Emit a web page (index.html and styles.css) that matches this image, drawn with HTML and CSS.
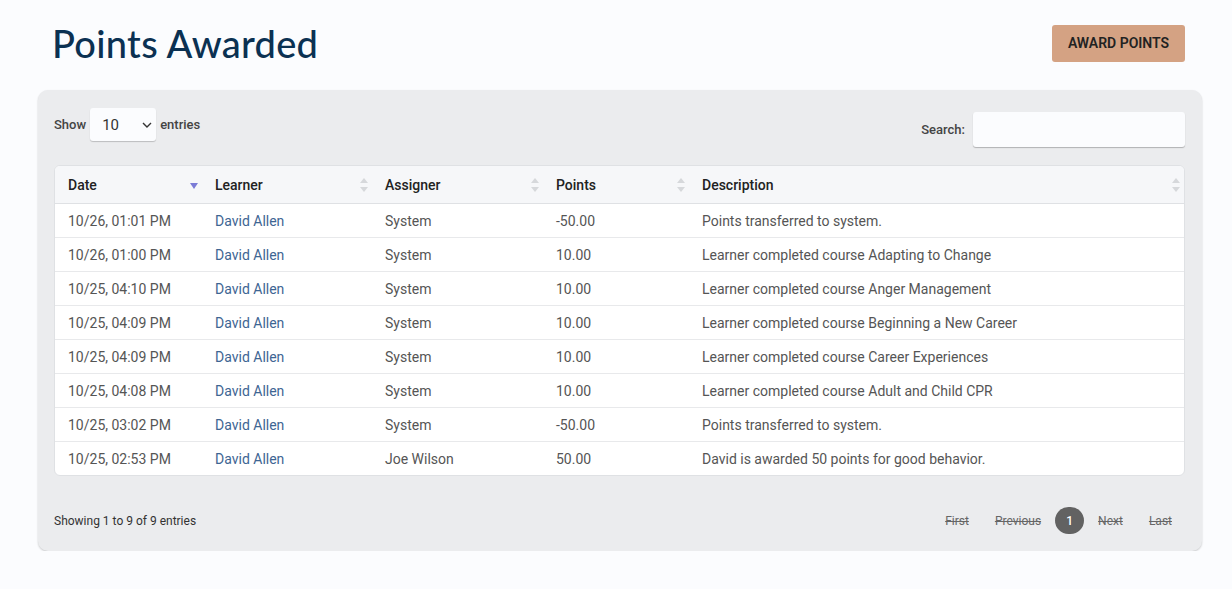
FILE: index.html
```html
<!DOCTYPE html>
<html lang="en">
<head>
    <meta charset="UTF-8">
    <title>Points Awarded</title>
    <link rel="stylesheet" href="styles.css">
</head>
<body>
    <div class="page">
        <div class="page-header">
            <h1>Points Awarded</h1>
            <button class="award-btn">AWARD POINTS</button>
        </div>

        <div class="card">
            <div class="table-top">
                <label class="length">
                    Show
                    <span class="select-box">10
                        <svg width="10" height="6" viewBox="0 0 10 6"><path d="M1 1l4 4 4-4" fill="none" stroke="#333" stroke-width="1.4"/></svg>
                    </span>
                    entries
                </label>
                <label class="search">
                    Search:
                    <input type="text">
                </label>
            </div>

            <div class="table-wrap">
                <table class="points-table">
                    <thead>
                        <tr>
                            <th class="c-date">Date<span class="sort sort-desc"></span></th>
                            <th class="c-learner">Learner<span class="sort"></span></th>
                            <th class="c-assigner">Assigner<span class="sort"></span></th>
                            <th class="c-points">Points<span class="sort"></span></th>
                            <th>Description<span class="sort"></span></th>
                        </tr>
                    </thead>
                    <tbody>
                        <tr><td>10/26, 01:01 PM</td><td><a href="#">David Allen</a></td><td>System</td><td>-50.00</td><td>Points transferred to system.</td></tr>
                        <tr><td>10/26, 01:00 PM</td><td><a href="#">David Allen</a></td><td>System</td><td>10.00</td><td>Learner completed course Adapting to Change</td></tr>
                        <tr><td>10/25, 04:10 PM</td><td><a href="#">David Allen</a></td><td>System</td><td>10.00</td><td>Learner completed course Anger Management</td></tr>
                        <tr><td>10/25, 04:09 PM</td><td><a href="#">David Allen</a></td><td>System</td><td>10.00</td><td>Learner completed course Beginning a New Career</td></tr>
                        <tr><td>10/25, 04:09 PM</td><td><a href="#">David Allen</a></td><td>System</td><td>10.00</td><td>Learner completed course Career Experiences</td></tr>
                        <tr><td>10/25, 04:08 PM</td><td><a href="#">David Allen</a></td><td>System</td><td>10.00</td><td>Learner completed course Adult and Child CPR</td></tr>
                        <tr><td>10/25, 03:02 PM</td><td><a href="#">David Allen</a></td><td>System</td><td>-50.00</td><td>Points transferred to system.</td></tr>
                        <tr><td>10/25, 02:53 PM</td><td><a href="#">David Allen</a></td><td>Joe Wilson</td><td>50.00</td><td>David is awarded 50 points for good behavior.</td></tr>
                    </tbody>
                </table>
            </div>

            <div class="table-bottom">
                <div class="info">Showing 1 to 9 of 9 entries</div>
                <div class="paging">
                    <span class="page-link">First</span>
                    <span class="page-link">Previous</span>
                    <span class="page-current">1</span>
                    <span class="page-link">Next</span>
                    <span class="page-link">Last</span>
                </div>
            </div>
        </div>
    </div>
</body>
</html>
```

FILE: styles.css
```css
body {
    margin: 0;
    background-color: #fbfcfe;
    font-family: Roboto, "Liberation Sans", sans-serif;
    font-size: 14px;
    color: #555;
}

.page {
    padding: 0 30px 0 38px;
}

.page-header {
    display: flex;
    justify-content: space-between;
    align-items: center;
    height: 90px;
    padding: 0 17px 0 14px;
}

.page-header h1 {
    margin: 0;
    font-family: Lato, "Open Sans", sans-serif;
    font-weight: 500;
    font-size: 38px;
    letter-spacing: 0.3px;
    color: #0b3152;
    position: relative;
    top: -2px;
}

.award-btn {
    background: #d4a283;
    border: none;
    border-radius: 3px;
    width: 133px;
    height: 37px;
    font-family: Roboto, sans-serif;
    font-weight: 600;
    font-size: 14px;
    color: #222;
    position: relative;
    top: -2px;
}

.card {
    background: #ebecee;
    border-radius: 10px;
    box-shadow: 0 1px 2px rgba(0,0,0,0.2);
    padding: 18px 17px 17px 16px;
}

.table-top {
    display: flex;
    justify-content: space-between;
    align-items: flex-start;
    font-size: 13px;
    font-weight: 500;
    color: #444;
}

.length {
    display: flex;
    align-items: center;
    gap: 4px;
}

.select-box {
    display: flex;
    align-items: center;
    justify-content: space-between;
    width: 66px;
    height: 33px;
    box-sizing: border-box;
    padding: 0 4px 0 12px;
    background: #fbfcfe;
    border-radius: 3px;
    box-shadow: 0 1px 1px rgba(0,0,0,0.2);
    font-size: 15px;
    font-weight: 400;
    color: #333;
}

.search {
    display: flex;
    align-items: center;
    gap: 8px;
    margin-top: 4px;
}

.search input {
    width: 212px;
    height: 35px;
    box-sizing: border-box;
    border: none;
    border-radius: 3px;
    background: #fbfcfe;
    box-shadow: 0 1px 1px rgba(0,0,0,0.25);
}

.table-wrap {
    margin-top: 18px;
    background: #fff;
    border: 1px solid #dfe1e4;
    border-radius: 6px;
    overflow: hidden;
}

.points-table {
    width: 100%;
    border-collapse: collapse;
}

.points-table th {
    position: relative;
    background: #f6f7f9;
    height: 37px;
    padding: 0 13px;
    text-align: left;
    font-weight: 500;
    color: #222;
    border-bottom: 1px solid #dfe1e4;
}

.points-table td {
    height: 33px;
    padding: 0 13px;
    border-top: 1px solid #e8e9eb;
    color: #555;
}

.points-table tbody tr:first-child td {
    border-top: none;
}

.points-table a {
    color: #3e6593;
    text-decoration: none;
}

.c-date { width: 121px; }
.c-learner { width: 144px; }
.c-assigner { width: 145px; }
.c-points { width: 120px; }

.sort {
    position: absolute;
    right: 4px;
    top: 12px;
    width: 8px;
    height: 14px;
}

.sort::before,
.sort::after {
    content: "";
    position: absolute;
    left: 0;
    border-left: 4px solid transparent;
    border-right: 4px solid transparent;
}

.sort::before {
    top: 0;
    border-bottom: 5px solid #d6d8db;
}

.sort::after {
    bottom: 0;
    border-top: 5px solid #d6d8db;
}

.sort-desc { right: 4px; top: 17px; }
.sort-desc::before { display: none; }
.sort-desc::after { border-top: 6px solid #7b7bd6; bottom: auto; top: 0; }

.table-bottom {
    display: flex;
    justify-content: space-between;
    align-items: center;
    margin-top: 31px;
    font-size: 12px;
    color: #333;
}

.paging {
    display: flex;
    align-items: center;
    margin-right: 0;
}

.page-link {
    padding: 0 13px;
    text-decoration: line-through;
    color: #666;
}

.page-current {
    display: flex;
    align-items: center;
    justify-content: center;
    width: 29px;
    height: 27px;
    border-radius: 14px;
    background: #626262;
    color: #fff;
    font-weight: 500;
    margin: 0 1px;
}
```
